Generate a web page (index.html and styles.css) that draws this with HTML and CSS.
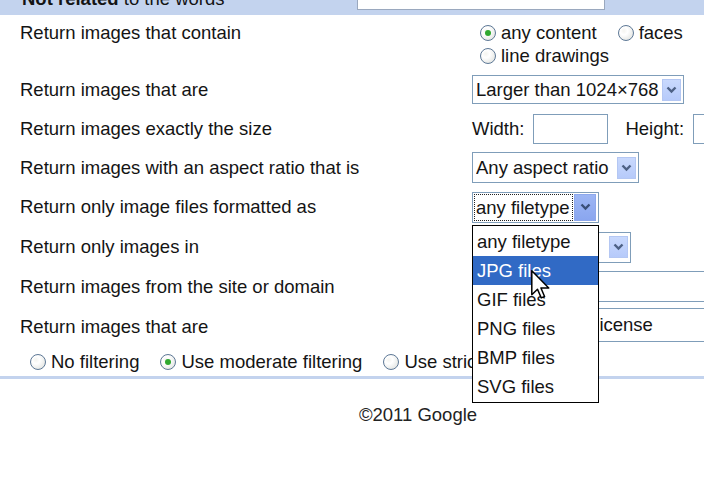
FILE: index.html
```html
<!DOCTYPE html>
<html>
<head>
<meta charset="utf-8">
<link rel="stylesheet" href="styles.css">
</head>
<body>
<div class="band">
  <div class="band-label"><b>Not related</b> to the words</div>
  <div class="band-input"></div>
</div>
<div class="form">
  <div class="row first">
    <div class="label">Return images that contain</div>
    <div class="radios">
      <div class="rline">
        <span class="opt"><span class="radio on"></span>any content</span>
        <span class="opt"><span class="radio"></span>faces</span>
        <span class="opt"><span class="radio"></span>clip art</span>
      </div>
      <div class="rline">
        <span class="opt"><span class="radio"></span>line drawings</span>
      </div>
    </div>
  </div>
  <div class="row">
    <div class="label">Return images that are</div>
    <div class="ctrl"><div class="select w-size"><span class="val">Larger than 1024×768</span><span class="arrow"><svg width="11" height="8" viewBox="0 0 11 8"><path d="M1.5 1.5 L5.5 5.5 L9.5 1.5" fill="none" stroke="#4d6185" stroke-width="2.4"/></svg></span></div></div>
  </div>
  <div class="row">
    <div class="label">Return images exactly the size</div>
    <div class="ctrl sizes"><span>Width:</span><span class="field w-num"></span><span class="h-lbl">Height:</span><span class="field w-num"></span></div>
  </div>
  <div class="row">
    <div class="label">Return images with an aspect ratio that is</div>
    <div class="ctrl"><div class="select w-aspect"><span class="val">Any aspect ratio</span><span class="arrow"><svg width="11" height="8" viewBox="0 0 11 8"><path d="M1.5 1.5 L5.5 5.5 L9.5 1.5" fill="none" stroke="#4d6185" stroke-width="2.4"/></svg></span></div></div>
  </div>
  <div class="row tall">
    <div class="label">Return only image files formatted as</div>
    <div class="ctrl">
      <div class="select-wrap">
        <div class="select w-type open"><span class="val focus">any filetype</span><span class="arrow pressed"><svg width="11" height="8" viewBox="0 0 11 8"><path d="M1.5 1.5 L5.5 5.5 L9.5 1.5" fill="none" stroke="#3a4f78" stroke-width="2.4"/></svg></span></div>
        <div class="dropdown">
          <div class="item">any filetype</div>
          <div class="item sel">JPG files</div>
          <div class="item">GIF files</div>
          <div class="item">PNG files</div>
          <div class="item">BMP files</div>
          <div class="item">SVG files</div>
          <svg class="cursor" width="19" height="30" viewBox="0 0 12.6 20"><path d="M0.5 0.5 L0.5 16.5 L4.3 12.8 L6.8 18.6 L9 17.7 L6.6 12 L11.8 12 Z" fill="#fff" stroke="#000" stroke-width="1" stroke-linejoin="round"/></svg>
        </div>
      </div>
    </div>
  </div>
  <div class="row tall">
    <div class="label">Return only images in</div>
    <div class="ctrl"><div class="select w-region"><span class="val">any region</span><span class="arrow"><svg width="11" height="8" viewBox="0 0 11 8"><path d="M1.5 1.5 L5.5 5.5 L9.5 1.5" fill="none" stroke="#4d6185" stroke-width="2.4"/></svg></span></div></div>
  </div>
  <div class="row tall">
    <div class="label">Return images from the site or domain</div>
    <div class="ctrl"><span class="field w-site"></span></div>
  </div>
  <div class="row tall">
    <div class="label">Return images that are</div>
    <div class="ctrl"><div class="select w-license"><span class="val">Not filtered by license</span></div></div>
  </div>
  <div class="safe">
    <span class="opt"><span class="radio"></span>No filtering</span>
    <span class="opt"><span class="radio on"></span>Use moderate filtering</span>
    <span class="opt"><span class="radio"></span>Use strict filtering</span>
  </div>
</div>
<div class="sep"></div>
<div class="footer">©2011 Google</div>
</body>
</html>
```

FILE: styles.css
```css
html, body {
  margin: 0;
  padding: 0;
  background: #fff;
}
body {
  width: 704px;
  height: 480px;
  overflow: hidden;
  font-family: "Liberation Sans", Arial, sans-serif;
  font-size: 18.5px;
  line-height: 22px;
  color: #141414;
}
.band {
  height: 15px;
  background: #c3d3ee;
  display: flex;
  overflow: hidden;
}
.band-label {
  width: 357px;
  box-sizing: border-box;
  padding-left: 22px;
  margin-top: -12px;
  white-space: nowrap;
}
.band-input {
  width: 248px;
  height: 30px;
  margin-top: -20px;
  box-sizing: border-box;
  border: 1px solid #9aa8be;
  background: #fff;
}
.form {
  padding-left: 20px;
}
.row {
  display: grid;
  grid-template-columns: 452px 1fr;
  align-items: center;
  height: 39px;
}
.row.tall {
  height: 40px;
}
.row.first {
  height: 55px;
  align-items: start;
  padding-top: 6px;
  box-sizing: border-box;
  line-height: 23px;
}
.label {
  white-space: nowrap;
}
.ctrl {
  display: flex;
  align-items: center;
  white-space: nowrap;
}
.rline {
  display: flex;
  white-space: nowrap;
  height: 23px;
  align-items: center;
}
.opt {
  display: inline-flex;
  align-items: center;
  margin-right: 13px;
  white-space: nowrap;
}
.radio {
  width: 16px;
  height: 16px;
  box-sizing: border-box;
  border: 1px solid #5d7896;
  border-radius: 50%;
  background: radial-gradient(circle at 35% 35%, #f4f4f0 0%, #fff 30%, #d9dcd8 100%);
  margin: 0 5px 0 8px;
  display: inline-flex;
  align-items: center;
  justify-content: center;
  flex: none;
}
.radio.on::after {
  content: "";
  width: 6px;
  height: 6px;
  border-radius: 50%;
  background: #2fa82f;
}
.select {
  display: inline-flex;
  align-items: center;
  height: 29px;
  box-sizing: border-box;
  border: 1px solid #7f9db9;
  background: #fff;
  padding: 0 2px 0 3px;
}
.select .val {
  flex: 1;
  white-space: nowrap;
  overflow: hidden;
}
.arrow {
  width: 19px;
  height: 22px;
  box-sizing: border-box;
  background: linear-gradient(#c9d9fd, #b6cafa);
  border: 1px solid #b4c7f3;
  display: flex;
  align-items: center;
  justify-content: center;
  flex: none;
}
.arrow.pressed {
  background: linear-gradient(#9db6f4, #8aa6ef);
  border-color: #8ea8ec;
  width: 22px;
  height: 27px;
}
.w-size { width: 212px; }
.w-aspect { width: 167px; height: 31px; }
.w-type { width: 127px; height: 31px; }
.w-region { width: 159px; height: 31px; }
.w-license { width: 300px; height: 34px; margin-top: -4px; }
.val.focus {
  outline: 1px dotted #222;
  outline-offset: 0;
  padding-left: 1px;
  margin-right: 2px;
  line-height: 25px;
}
.select.open {
  padding-left: 2px;
}
.sizes span.h-lbl {
  margin-left: 17px;
}
.field {
  display: inline-block;
  height: 30px;
  box-sizing: border-box;
  border: 1px solid #7f9db9;
  background: #fff;
}
.w-num {
  width: 75px;
  margin-left: 9px;
}
.w-site {
  width: 300px;
  height: 31px;
  margin-top: -2px;
}
.select-wrap {
  position: relative;
}
.dropdown {
  position: absolute;
  left: 0;
  top: 33px;
  width: 127px;
  box-sizing: border-box;
  border: 1px solid #000;
  background: #fff;
  z-index: 5;
  padding-top: 1px;
  padding-bottom: 1px;
}
.item {
  height: 29px;
  line-height: 30px;
  padding-left: 4px;
  white-space: nowrap;
}
.item.sel {
  background: #316ac5;
  color: #fff;
}
.cursor {
  position: absolute;
  left: 58px;
  top: 44px;
}
.safe {
  display: flex;
  align-items: center;
  height: 30px;
  margin-left: 2px;
  white-space: nowrap;
}
.sep {
  height: 3px;
  background: #c3d3ee;
  margin-top: -1px;
}
.footer {
  width: 836px;
  text-align: center;
  margin-top: 25px;
  color: #222;
}
```
